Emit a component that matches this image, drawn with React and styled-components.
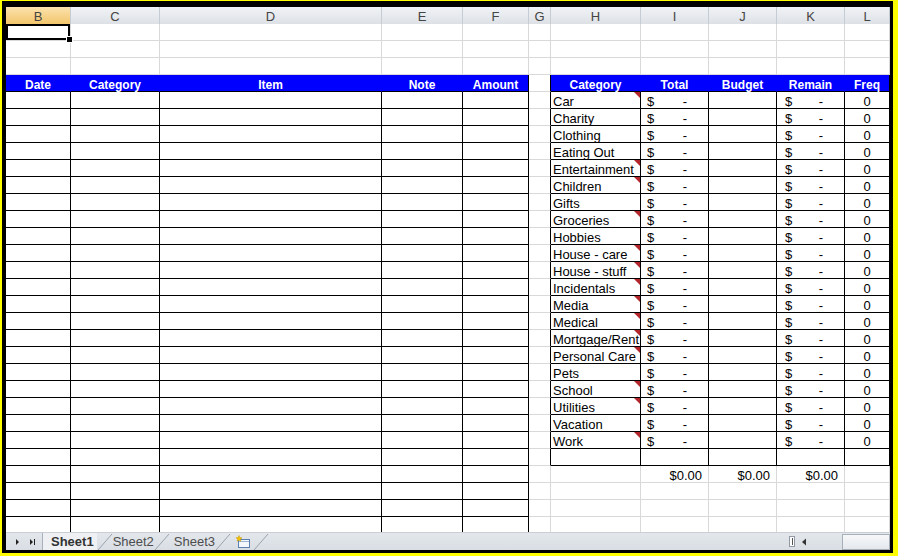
import React from 'react'
import styled, { createGlobalStyle } from 'styled-components'

const GlobalStyle = createGlobalStyle`
  html, body { margin: 0; padding: 0; background: #ffff00; }
  body { font-family: "Liberation Sans", Arial, sans-serif; }
`;

// column widths B..L, each including its right border
const COLS = '65px 89px 222px 81px 66px 22px 90px 68px 68px 68px 45px';
const LETTERS = ['B', 'C', 'D', 'E', 'F', 'G', 'H', 'I', 'J', 'K', 'L'];
const LINE = { grid: '#d9d9d9', black: '#000', blue: '#0000ff', none: 'transparent' };

const CATEGORIES = [
  ['Car', true], ['Charity', false], ['Clothing', false], ['Eating Out', false],
  ['Entertainment', true], ['Children', true], ['Gifts', false], ['Groceries', true],
  ['Hobbies', false], ['House - care', true], ['House - stuff', true], ['Incidentals', true],
  ['Media', true], ['Medical', true], ['Mortgage/Rent', true], ['Personal Care', true],
  ['Pets', false], ['School', true], ['Utilities', true], ['Vacation', false], ['Work', true],
];

const Frame = styled.div`
  width: 898px;
  height: 556px;
  box-sizing: border-box;
  padding: 1px 5px 3px 2px;
  background: #ffff00;
`;

const Window = styled.div`
  height: 100%;
  box-sizing: border-box;
  border-style: solid;
  border-color: #000;
  border-width: 6px 3px 3px 4px;
  background: #fff;
  display: flex;
  flex-direction: column;
  overflow: hidden;
`;

const ColumnBar = styled.div`
  display: grid;
  grid-template-columns: ${COLS};
  height: 17px;
  flex: none;
`;

const ColumnHead = styled.div`
  box-sizing: border-box;
  border-right: 1px solid #c6ccd3;
  border-bottom: 1px solid #a9b1bb;
  background: ${p => p.$active
    ? 'linear-gradient(#fbe2ad, #f3c66c)'
    : 'linear-gradient(#f1f3f6, #dde1e6)'};
  color: #444;
  font-size: 13px;
  line-height: 15px;
  padding-top: 2px;
  text-align: center;
`;

const Sheet = styled.div`
  flex: 1;
  overflow: hidden;
`;

const Row = styled.div`
  display: grid;
  grid-template-columns: ${COLS};
  height: 17px;
`;

const Cell = styled.div`
  position: relative;
  box-sizing: border-box;
  height: 17px;
  border-right: 1px solid ${p => LINE[p.$r]};
  border-bottom: 1px solid ${p => LINE[p.$b]};
  background: ${p => p.$bg || '#fff'};
  color: ${p => (p.$head ? '#fff' : '#000')};
  font-size: ${p => (p.$head ? '12px' : '13px')};
  font-weight: ${p => (p.$head ? 'bold' : 'normal')};
  line-height: 12px;
  white-space: nowrap;
  display: flex;
  align-items: flex-end;
  justify-content: ${p => p.$align || 'flex-start'};
  padding: ${p => p.$pad || '0 0 0 2px'};
  box-shadow: ${p => (p.$selected ? 'inset 0 0 0 2px #000' : 'none')};

  ${p => p.$comment && `
    &::after {
      content: '';
      position: absolute;
      top: 0;
      right: 0;
      border-top: 6px solid #b3262b;
      border-left: 6px solid transparent;
    }
  `}

  ${p => p.$selected && `
    &::after {
      content: '';
      position: absolute;
      right: -3px;
      bottom: -3px;
      width: 5px;
      height: 5px;
      background: #000;
      border: 1px solid #fff;
      z-index: 2;
    }
  `}
`;

const TabBar = styled.div`
  flex: none;
  height: 18px;
  display: flex;
  align-items: stretch;
  background: linear-gradient(#e3e7ec, #d9dee4);
  border-top: 1px solid #c9ced5;
  box-sizing: border-box;
`;

const Nav = styled.div`
  width: 37px;
  display: flex;
  align-items: center;
  gap: 7px;
  padding-left: 9px;
  box-sizing: border-box;
  border-right: 1px solid #aab1ba;
`;

const Tab = styled.div`
  display: flex;
  align-items: center;
  padding: ${p => p.$pad};
  background: ${p => (p.$active ? '#eef0f3' : 'transparent')};
  color: ${p => (p.$active ? '#333' : '#4d4d4d')};
  font-size: 13px;
  font-weight: ${p => (p.$active ? 'bold' : 'normal')};
`;

const Spacer = styled.div`
  flex: 1;
`;

const ScrollArea = styled.div`
  width: 101px;
  display: flex;
  align-items: center;
`;

const Splitter = styled.div`
  width: 6px;
  height: 11px;
  box-sizing: border-box;
  border: 1px solid #8f98a3;
  background: #fff;
  display: flex;
  justify-content: center;
  &::before {
    content: '';
    width: 1px;
    margin-top: 1px;
    height: 7px;
    background: #555;
  }
`;

const Thumb = styled.div`
  margin-left: auto;
  width: 48px;
  height: 16px;
  box-sizing: border-box;
  border: 1px solid #a7afb9;
  background: linear-gradient(#f6f7f9, #e4e8ed);
`;

const Slash = ({ w = 16 }) => (
  <svg width={w} height="17" viewBox={`0 0 ${w} 17`}>
    <line x1="1" y1="17" x2={w - 1} y2="1" stroke="#9aa2ac" strokeWidth="1" />
  </svg>
);

const Arrow = ({ end }) => (
  <svg width="7" height="8" viewBox="0 0 7 8">
    <polygon points="1,1 4,4 1,7" fill="#222" />
    {end && <rect x="5" y="1" width="1" height="6" fill="#222" />}
  </svg>
);

const InsertSheet = () => (
  <svg width="16" height="14" viewBox="0 0 16 14">
    <rect x="3.5" y="4.5" width="11" height="8" fill="#f4f7fb" stroke="#5b7fae" />
    <line x1="4" y1="6.5" x2="14" y2="6.5" stroke="#9bb4d3" />
    <path d="M4 0.5 L4.8 2.6 L7 2.8 L5.3 4.2 L5.9 6.3 L4 5.1 L2.1 6.3 L2.7 4.2 L1 2.8 L3.2 2.6 Z" fill="#f5c400" stroke="#c99700" strokeWidth="0.5" />
  </svg>
);

const Money = () => (
  <>
    <span>$</span>
    <span>-</span>
  </>
);

function leftCells(type, key) {
  return [0, 1, 2, 3, 4].map(i => {
    if (type === 'blank') return <Cell key={key + i} $r="grid" $b="grid" $selected={key === 'r0' && i === 0} />;
    return <Cell key={key + i} $r="black" $b="black" />;
  });
}

const LEFT_HEADS = ['Date', 'Category', 'Item', 'Note', 'Amount'];
const RIGHT_HEADS = ['Category', 'Total', 'Budget', 'Remain', 'Freq'];

function HeadRow() {
  return (
    <Row>
      {LEFT_HEADS.map((t, i) => (
        <Cell key={t} $head $bg="#0000ff" $r={i === 4 ? 'black' : 'blue'} $b="black" $align="center" $pad="0">{t}</Cell>
      ))}
      <Cell $r="black" $b="grid" />
      {RIGHT_HEADS.map((t, i) => (
        <Cell key={'h' + t} $head $bg="#0000ff" $r={i === 4 ? 'black' : 'blue'} $b="black" $align="center" $pad="0">{t}</Cell>
      ))}
    </Row>
  );
}

function DataRow({ name, comment }) {
  const filled = name !== undefined;
  return (
    <Row>
      {leftCells('data', 'd')}
      <Cell $r="black" $b="grid" />
      <Cell $r="black" $b="black" $comment={comment}>{name}</Cell>
      <Cell $r="black" $b="black" $align="space-between" $pad="0 21px 0 6px">{filled && <Money />}</Cell>
      <Cell $r="black" $b="black" />
      <Cell $r="black" $b="black" $align="space-between" $pad="0 21px 0 8px">{filled && <Money />}</Cell>
      <Cell $r="black" $b="black" $align="center" $pad="0">{filled && '0'}</Cell>
    </Row>
  );
}

function TailRow({ totals }) {
  return (
    <Row>
      {leftCells('data', 't')}
      <Cell $r="grid" $b="grid" />
      <Cell $r="grid" $b="grid" />
      <Cell $r="grid" $b="grid" $align="flex-end" $pad="0 6px 0 0">{totals && '$0.00'}</Cell>
      <Cell $r="grid" $b="grid" $align="flex-end" $pad="0 6px 0 0">{totals && '$0.00'}</Cell>
      <Cell $r="grid" $b="grid" $align="flex-end" $pad="0 6px 0 0">{totals && '$0.00'}</Cell>
      <Cell $r="grid" $b="grid" />
    </Row>
  );
}

function BlankRow({ id }) {
  return (
    <Row>
      {leftCells('blank', id)}
      {[5, 6, 7, 8, 9, 10].map(i => <Cell key={id + i} $r="grid" $b="grid" />)}
    </Row>
  );
}

export default function App() {
  return (
    <>
      <GlobalStyle />
      <Frame>
        <Window>
          <ColumnBar>
            {LETTERS.map(l => <ColumnHead key={l} $active={l === 'B'}>{l}</ColumnHead>)}
          </ColumnBar>
          <Sheet>
            <BlankRow id="r0" />
            <BlankRow id="r1" />
            <BlankRow id="r2" />
            <HeadRow />
            {CATEGORIES.map(([name, c]) => <DataRow key={name} name={name} comment={c} />)}
            <DataRow />
            <TailRow totals />
            <TailRow />
            <TailRow />
            <TailRow />
          </Sheet>
          <TabBar>
            <Nav>
              <Arrow />
              <Arrow end />
            </Nav>
            <Tab $active $pad="0 3px 0 8px">Sheet1</Tab>
            <Slash />
            <Tab $pad="0">Sheet2</Tab>
            <Slash />
            <Tab $pad="0 0 0 4px">Sheet3</Tab>
            <Slash />
            <Tab $pad="0 2px 0 4px"><InsertSheet /></Tab>
            <Slash />
            <Spacer />
            <ScrollArea>
              <Splitter />
              <svg width="14" height="8" viewBox="0 0 14 8">
                <polygon points="11,0.5 7,4 11,7.5" fill="#333" />
              </svg>
              <Thumb />
            </ScrollArea>
          </TabBar>
        </Window>
      </Frame>
    </>
  );
}
